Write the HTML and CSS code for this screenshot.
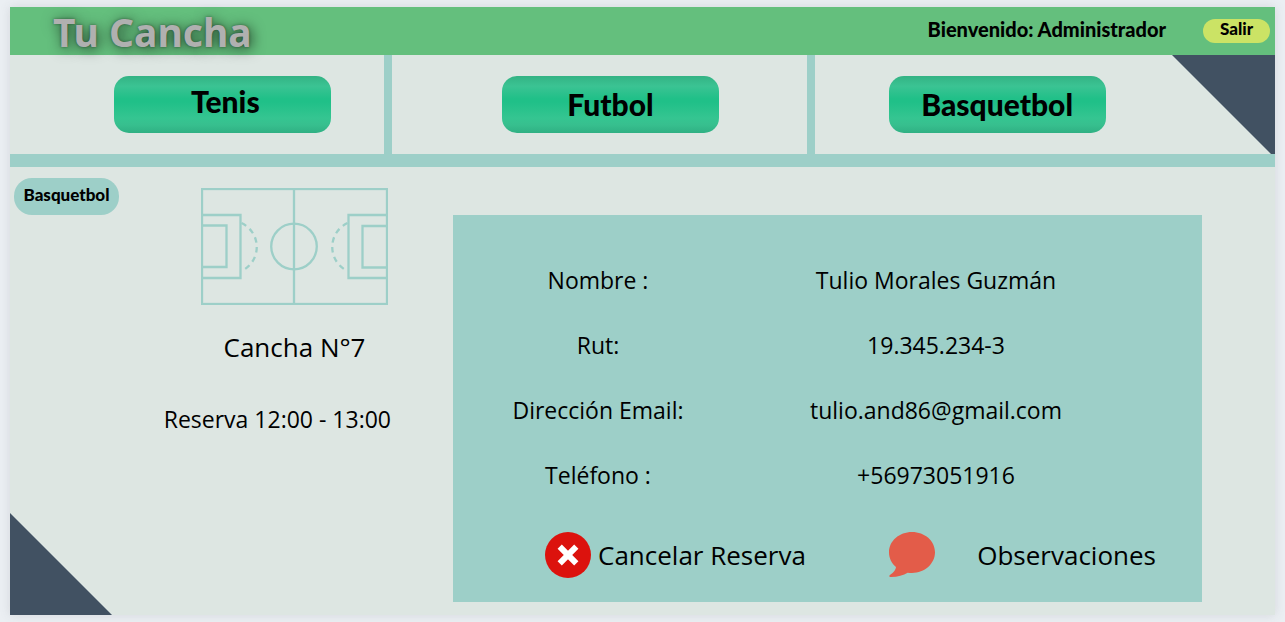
FILE: index.html
```html
<!DOCTYPE html>
<html lang="es">
<head>
<meta charset="utf-8">
<meta name="viewport" content="width=device-width, initial-scale=1">
<title>Tu Cancha</title>
<link rel="stylesheet" href="styles.css">
</head>
<body>
<div class="app">
  <header class="topbar">
    <h1 class="brand">Tu Cancha</h1>
    <p class="welcome">Bienvenido: Administrador</p>
    <button class="logout" type="button">Salir</button>
  </header>
  <nav class="sports">
    <div class="sport sport-tenis"><button class="sport-button raised" type="button">Tenis</button></div>
    <div class="sport sport-futbol"><button class="sport-button" type="button">Futbol</button></div>
    <div class="sport sport-basquetbol"><button class="sport-button" type="button">Basquetbol</button></div>
  </nav>
  <main class="content">
    <section class="court">
      <span class="badge">Basquetbol</span>
      <div class="court-info">
        <figure class="court-figure">
          <svg class="court-plan" viewBox="0 0 187 117" fill="none" stroke="#9dcfc8" stroke-width="2.300" aria-hidden="true">
            <rect x="1" y="1" width="185" height="115"/>
            <path d="M93 1v115"/>
            <circle cx="93" cy="58.500" r="22.800"/>
            <path d="M1 27h38.500v63H1M1 37.500h24.500v41.500H1M186 27h-38.500v63H186M186 38h-24.500v41.500H186"/>
            <path stroke-dasharray="5.500 4.500" d="M40.500 35A26.500 26.500 0 0 1 40.500 83M146.500 35A26.500 26.500 0 0 0 146.500 83"/>
          </svg>
          <figcaption class="court-name">Cancha N°7</figcaption>
        </figure>
        <p class="slot">Reserva 12:00 - 13:00</p>
      </div>
    </section>
    <section class="booking">
      <dl class="details">
        <dt>Nombre :</dt><dd>Tulio Morales Guzmán</dd>
        <dt>Rut:</dt><dd>19.345.234-3</dd>
        <dt>Dirección Email:</dt><dd>tulio.and86@gmail.com</dd>
        <dt>Teléfono :</dt><dd>+56973051916</dd>
      </dl>
      <div class="actions">
        <button class="action" type="button">
          <svg class="icon" viewBox="0 0 46 46" aria-hidden="true"><circle cx="23" cy="23" r="23" fill="#dc120d"/><path d="M14.700 14.700l16.600 16.600M31.300 14.700L14.700 31.300" stroke="#fff" stroke-width="6"/></svg>
          Cancelar Reserva
        </button>
        <button class="action action-notes" type="button">
          <svg class="icon" viewBox="0 0 46 46" aria-hidden="true"><path fill="#e35c49" d="M23 0C10.300 0 0 9 0 20.300c0 6 2.500 11 7 14.700C6.500 39 3 41.500.7 43.300c-.7.600-.5 1.700.5 1.700 7 .2 13-1.800 17.500-4.300 1.500.2 3 .3 4.300.3 12.700 0 23-9.300 23-20.700S35.700 0 23 0z"/></svg>
          Observaciones
        </button>
      </div>
    </section>
  </main>
</div>
</body>
</html>
```
FILE: styles.css
```css
* { box-sizing: border-box; }

body {
  margin: 0;
  min-height: 100vh;
  padding: 7px 10px;
  display: flex;
  background: #ebeff3;
  color: #000;
  font-family: "Open Sans", sans-serif;
  font-weight: 400;
}

h1, p, dl, dd, figure { margin: 0; }

button {
  border: 0;
  padding: 0;
  background: none;
  color: inherit;
  font: inherit;
  cursor: pointer;
}

.app {
  position: relative;
  flex: 1;
  display: flex;
  flex-direction: column;
  background: #dde6e2;
  box-shadow: 0 0 10px rgba(80, 80, 90, 0.15);
}

.app::after {
  content: "";
  position: absolute;
  left: 0;
  bottom: 0;
  width: 102px;
  height: 102px;
  background: #415162;
  clip-path: polygon(0 0, 100% 100%, 0 100%);
}

.topbar {
  display: flex;
  align-items: center;
  height: 48px;
  padding: 0 5px 0 43px;
  background: #64bf7d;
  font-family: Lato, sans-serif;
  font-weight: 900;
}

.brand {
  position: relative;
  z-index: 1;
  flex: 1;
  padding-top: 2px;
  color: #b0b0b0;
  font-family: "Noto Sans", sans-serif;
  font-size: 39px;
  line-height: 48px;
  text-shadow: 0 0 3px rgba(0, 0, 0, 0.4), 2px 2px 14px rgba(0, 0, 0, 0.7);
}

.welcome {
  margin-right: 37px;
  padding-bottom: 4px;
  font-size: 20px;
  line-height: 40px;
}

.logout {
  width: 67px;
  height: 24px;
  padding-bottom: 4px;
  border-radius: 12px;
  background: #cbe365;
  font-size: 17px;
  line-height: 20px;
}

.sports {
  position: relative;
  display: grid;
  grid-template-columns: 374fr 424fr 468fr;
  height: 112px;
  border-bottom: 13px solid #9dcfc8;
}

.sports::after {
  content: "";
  position: absolute;
  top: 0;
  right: 0;
  width: 103px;
  height: 99px;
  background: #415162;
  clip-path: polygon(0 0, 100% 0, 100% 100%, 99px 100%);
}

.sport {
  display: flex;
  justify-content: center;
  align-items: flex-start;
  padding-top: 21px;
}

.sport + .sport { border-left: 8px solid #9dcfc8; }
.sport-tenis { padding-left: 51px; }
.sport-futbol { padding-left: 22px; }
.sport-basquetbol { padding-right: 96px; }

.sport-button {
  width: 217px;
  height: 57px;
  padding-bottom: 2px;
  border-radius: 15px;
  background: linear-gradient(#33b384, #3bc393 18%, #20c088 40%, #20c088 46%, #35c591 74%, #37bf8e 86%, #2fb083);
  font-family: Lato, sans-serif;
  font-size: 30px;
  font-weight: 900;
}

.raised {
  padding-bottom: 8px;
  padding-left: 6px;
}

.content {
  flex: 1;
  display: grid;
  grid-template-columns: 443fr 749fr;
  padding: 0 73px 13px 0;
}

.court {
  display: flex;
  justify-content: space-between;
  align-items: flex-start;
  padding: 11px 62px 0 4px;
}

.badge {
  width: 105px;
  height: 37px;
  border-radius: 18px;
  background: #9dcfc8;
  font-family: Lato, sans-serif;
  font-size: 17px;
  font-weight: 900;
  line-height: 33px;
  text-align: center;
}

.court-info {
  display: flex;
  flex-direction: column;
  align-items: flex-end;
  padding-top: 10px;
  white-space: nowrap;
}

.court-figure {
  padding-right: 3px;
  text-align: center;
}

.court-plan {
  display: block;
  width: 187px;
  height: 117px;
}

.court-name {
  margin-top: 24px;
  font-size: 26px;
  line-height: 36px;
}

.slot {
  margin-top: 36px;
  font-size: 23px;
  line-height: 36px;
}

.booking {
  margin-top: 48px;
  padding-top: 33px;
  background: #9dcfc8;
}

.details {
  display: grid;
  grid-template-columns: 290fr 386fr;
  padding-right: 73px;
  font-size: 23px;
  line-height: 65px;
  text-align: center;
}

.actions {
  display: flex;
  justify-content: space-between;
  margin-top: 24px;
  padding: 0 46px 0 92px;
}

.action {
  display: flex;
  align-items: center;
  gap: 7px;
  font-size: 26px;
  line-height: 46px;
  white-space: nowrap;
}

.action-notes { gap: 42px; }

.icon {
  width: 46px;
  height: 46px;
}
```
